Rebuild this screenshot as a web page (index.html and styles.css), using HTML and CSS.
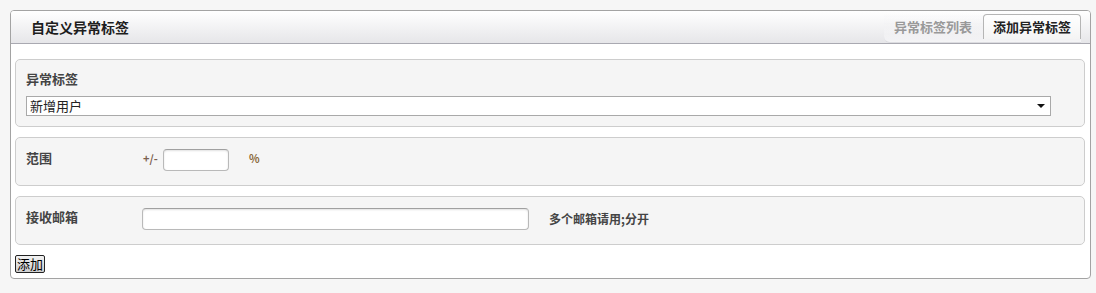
FILE: index.html
```html
<!DOCTYPE html>
<html>
	<head>
		<meta charset="utf-8">
		<title>自定义异常标签</title>
		<link rel="stylesheet" href="styles.css">
	</head>
	<body>
		<div class="panel">
			<div class="panel-head">
				<h2 class="titlu">自定义异常标签</h2>
				<ul class="tabs">
					<li class="tab">异常标签列表</li>
					<li class="tab activ">添加异常标签</li>
				</ul>
			</div>
			<div class="panel-body">
				<div class="camp camp-sus">
					<label class="eticheta" for="tag">异常标签</label>
					<div class="select">
						<span>新增用户</span>
						<span class="sageata"></span>
					</div>
				</div>
				<div class="camp">
					<div class="rand">
						<label class="eticheta lat" for="range">范围</label>
						<span class="plusminus">+/-</span>
						<input id="range" class="text mic" type="text" />
						<span class="procent">%</span>
					</div>
				</div>
				<div class="camp camp-jos">
					<div class="rand">
						<label class="eticheta lat" for="mail">接收邮箱</label>
						<input id="mail" class="text mare" type="text" />
						<span class="nota">多个邮箱请用;分开</span>
					</div>
				</div>
				<input type="button" class="adauga" value="添加" />
			</div>
		</div>
	</body>
</html>
```

FILE: styles.css
```css
body {
	margin: 0;
	padding: 10px 5px 0 10px;
	background-color: #f6f6f6;
	font-family: "Noto Sans CJK SC", "DejaVu Sans", sans-serif;
	font-size: 12px;
	color: #444;
}

	.panel {
		width: 1079px;
		border: 1px solid #a3a3a3;
		border-radius: 4px;
		background-color: #ffffff;
		overflow: hidden;
	}

	.panel-head {
		display: flex;
		justify-content: space-between;
		align-items: flex-end;
		height: 32px;
		background: linear-gradient(#ffffff, #e6e6e9);
		border-bottom: 1px solid #a9a9b1;
	}

	.titlu {
		margin: 0 0 6px 20px;
		font-size: 14px;
		line-height: 20px;
		font-weight: bold;
		color: #1e1e1e;
	}

	.tabs {
		display: flex;
		align-items: flex-end;
		margin: 0 9px 0 0;
		padding: 0 0 3px 10px;
		list-style: none;
		border-radius: 0 0 0 6px;
		background: linear-gradient(rgba(255,255,255,0), #f3f3f5);
		border-bottom: 1px solid #dcdce0;
	}

	.tab {
		padding: 3px 10px 4px 0;
		font-size: 13px;
		line-height: 17px;
		font-weight: bold;
		color: #999;
	}

	.tab.activ {
		margin-left: 1px;
		padding: 3px 9px 4px 9px;
		color: #222;
		background: linear-gradient(#ffffff, #f4f4f4);
		border: 1px solid #b5b5b5;
		border-bottom: none;
		border-radius: 4px 4px 0 0;
	}

	.panel-body {
		padding: 15px 5px 5px 4px;
	}

	.camp {
		margin-bottom: 10px;
		padding: 11px 10px 14px 10px;
		background-color: #f5f5f5;
		border: 1px solid #cdcdcd;
		border-radius: 5px;
	}

	.camp-sus {
		padding: 10px 10px 10px 10px;
	}

	.camp-jos {
		margin-bottom: 10px;
	}

	.eticheta {
		display: block;
		font-size: 13px;
		font-weight: bold;
		color: #444;
		line-height: 18px;
	}

	.camp-sus .eticheta {
		margin-bottom: 8px;
	}

	.select {
		display: flex;
		justify-content: space-between;
		align-items: center;
		width: 1016px;
		height: 18px;
		padding: 0 4px 0 3px;
		background-color: #ffffff;
		border: 1px solid #a9a9a9;
		color: #222;
		font-size: 13px;
		line-height: 18px;
	}

	.sageata {
		width: 0;
		height: 0;
		margin-right: 1px;
		border-left: 4px solid transparent;
		border-right: 4px solid transparent;
		border-top: 4px solid #111;
	}

	.rand {
		display: flex;
		align-items: center;
		height: 22px;
	}

	.rand .eticheta {
		margin-top: -4px;
	}

	.lat {
		width: 117px;
	}

	.plusminus {
		width: 20px;
		margin-top: -4px;
		font-weight: bold;
		font-size: 11px;
		color: #7a6050;
	}

	.text {
		box-sizing: border-box;
		height: 22px;
		border: 1px solid #b9b9b9;
		border-top-color: #a0a0a0;
		border-radius: 4px;
		background-color: #ffffff;
		box-shadow: inset 0 1px 2px rgba(0,0,0,0.12);
		outline: none;
	}

	.mic {
		width: 66px;
	}

	.procent {
		margin-left: 20px;
		margin-top: -4px;
		font-weight: bold;
		font-size: 11px;
		color: #8a6a3a;
	}

	.mare {
		width: 387px;
		margin-left: -1px;
	}

	.nota {
		margin-left: 20px;
		margin-top: -2px;
		font-size: 12px;
		font-weight: bold;
		color: #444;
	}

	.adauga {
		display: block;
		margin: 0;
		padding: 0 1px;
		height: 18px;
		font-family: "Noto Sans CJK SC", sans-serif;
		font-size: 13px;
		line-height: 14px;
		color: #000;
		background: linear-gradient(#f2f2f2, #cfcfcf);
		border: 1px solid #222;
		border-radius: 2px;
	}
```
